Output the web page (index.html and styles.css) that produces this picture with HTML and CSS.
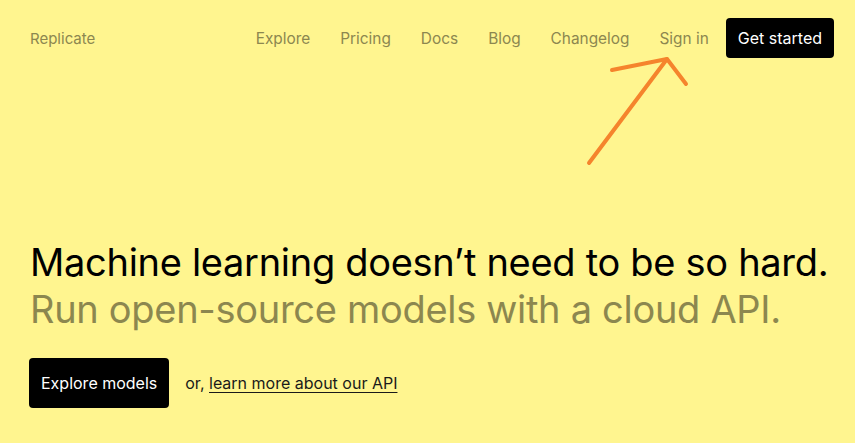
FILE: index.html
```html
<!DOCTYPE html>
<html lang="en">
<head>
  <meta charset="UTF-8">
  <meta name="viewport" content="width=device-width, initial-scale=1.0">
  <title>Replicate</title>
  <link rel="stylesheet" href="styles.css">
</head>
<body>

<header class="topbar">
  <a class="brand" href="#">Replicate</a>
  <nav class="nav">
    <a href="#">Explore</a>
    <a href="#">Pricing</a>
    <a href="#">Docs</a>
    <a href="#">Blog</a>
    <a href="#">Changelog</a>
    <a href="#">Sign in</a>
    <a class="btn btn-small" href="#">Get started</a>
  </nav>
</header>

<!-- hand-drawn arrow pointing at "Sign in" -->
<svg class="arrow" width="855" height="200" viewBox="0 0 855 200">
  <g fill="none" stroke="#f5842c" stroke-width="4" stroke-linecap="round" stroke-linejoin="round">
    <path d="M589 163 L667 59"/>
    <path d="M612 70 L667 59 L686 84"/>
  </g>
</svg>

<main class="hero">
  <h1>Machine learning doesn’t need to be so hard.<br>
    <span class="sub">Run open-source models with a cloud API.</span></h1>
  <div class="actions">
    <a class="btn btn-big" href="#">Explore models</a>
    <span class="or">or, <a href="#">learn more about our API</a></span>
  </div>
</main>

</body>
</html>
```

FILE: styles.css
```css
body {
  margin: 0;
  font-family: Inter, "Noto Sans", sans-serif;
  background: #fff58f;
  color: #000;
  height: 443px;
  overflow: hidden;
}
a {
  color: inherit;
  text-decoration: none;
}
.topbar {
  display: flex;
  align-items: center;
  justify-content: space-between;
  padding: 18px 21px 0 30px;
  font-size: 15px;
  color: #8c874f;
}
.nav {
  display: flex;
  align-items: center;
  gap: 30px;
  font-size: 15.4px;
}
.nav .btn {
  margin-left: -13px;
}
.btn {
  background: #000;
  color: #fff;
  border-radius: 4px;
  display: inline-flex;
  align-items: center;
}
.btn-small {
  height: 40px;
  padding: 0 12px;
  font-size: 16px;
}
.btn-big {
  height: 50px;
  padding: 0 12px;
  font-size: 16px;
}
.arrow {
  position: absolute;
  left: 0;
  top: 0;
  pointer-events: none;
}
.hero {
  padding: 181px 20px 0 30px;
}
h1 {
  margin: 0;
  font-size: 38px;
  font-weight: 400;
  line-height: 47px;
  letter-spacing: -0.3px;
  white-space: nowrap;
}
.sub {
  color: #8c874f;
}
.actions {
  display: flex;
  align-items: center;
  gap: 16px;
  margin-top: 25px;
  margin-left: -1px;
}
.or {
  font-size: 16px;
  color: #1a1a1a;
}
.or a {
  text-decoration: underline;
  text-underline-offset: 3px;
  text-decoration-thickness: 1px;
}
```
